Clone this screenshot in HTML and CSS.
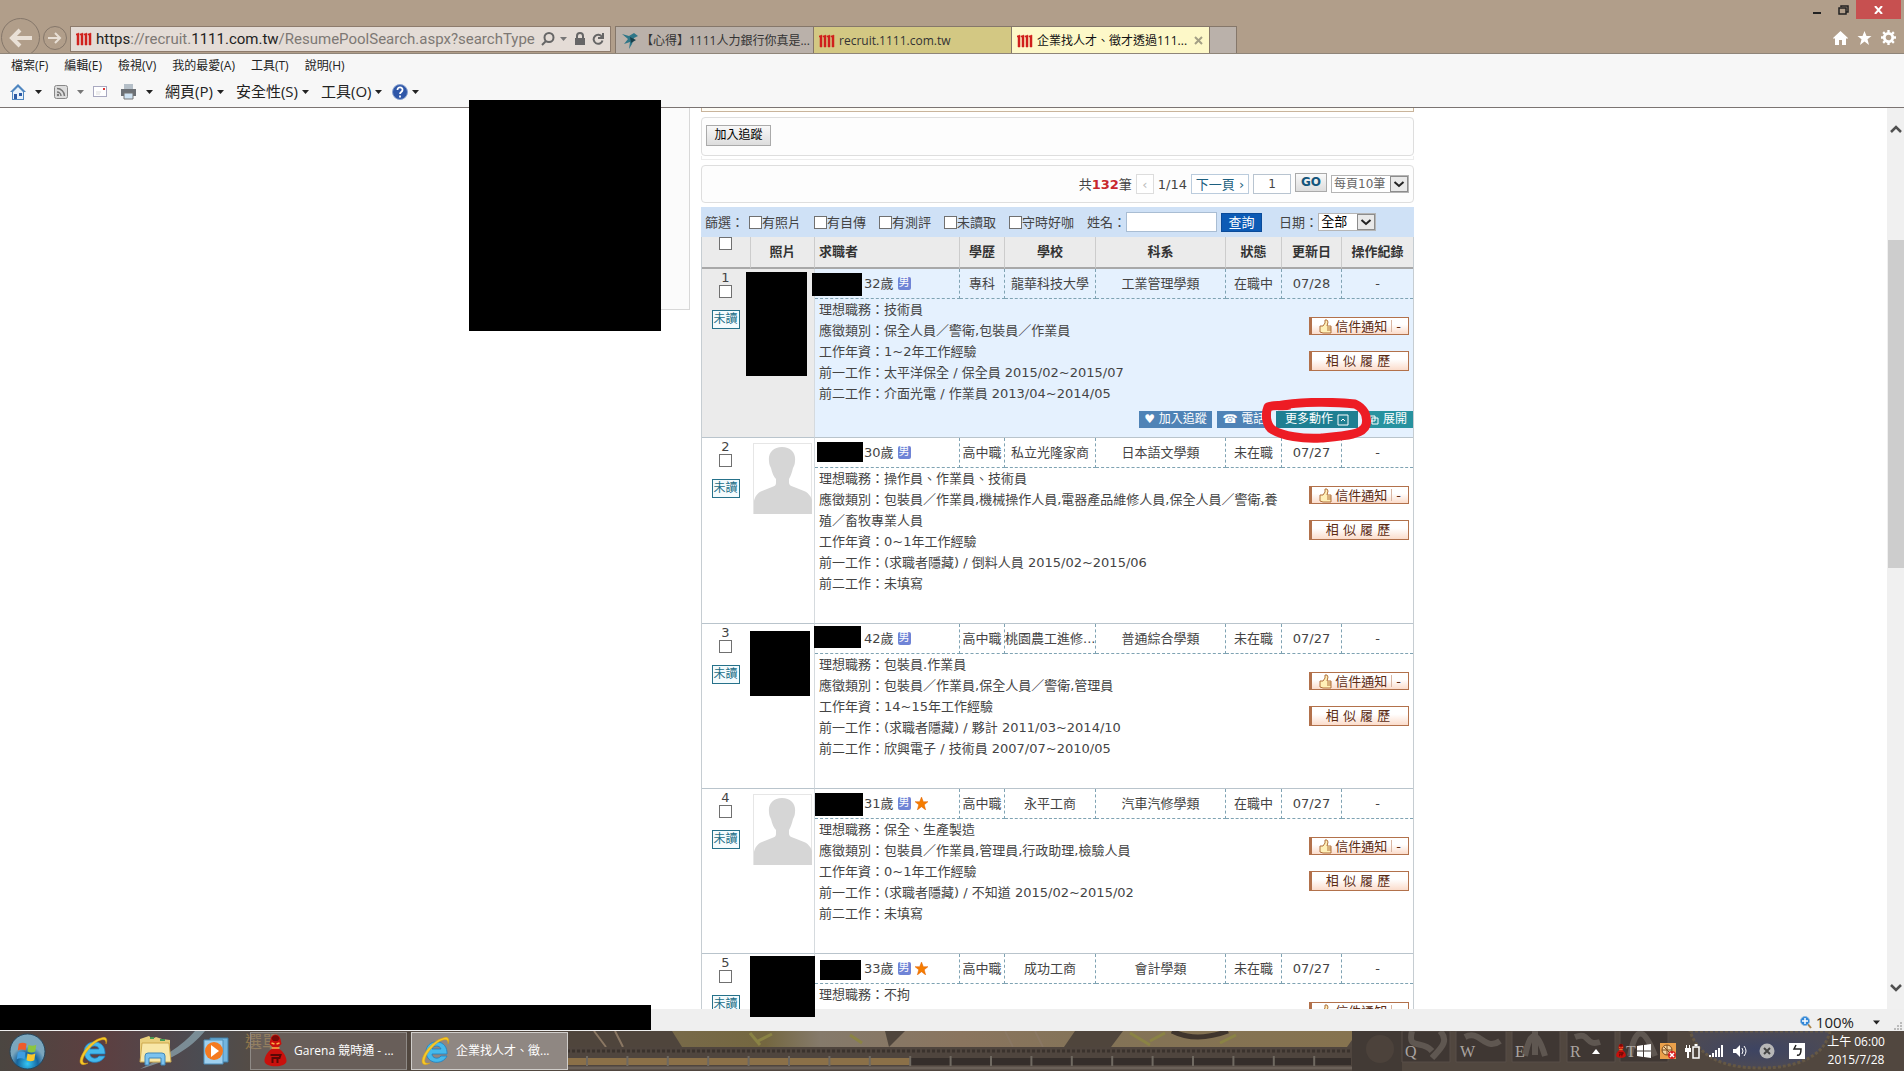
FILE: index.html
```html
<!DOCTYPE html>
<html lang="zh-Hant">
<head>
<meta charset="utf-8">
<title>企業找人才、徵才透過1111人力銀行</title>
<link rel="stylesheet" href="styles.css">
</head>
<body>
<svg class="defs" aria-hidden="true">
  <symbol id="favicon" viewBox="0 0 16 14"><path d="M0 2l3-1v12H1V3L0 3zM4 2l3-1v12H5V3L4 3zM8 2l3-1v12H9V3L8 3zM12 2l3-1v12h-2V3l-1 0z" fill="#d0211c" stroke="#d0211c" stroke-width=".5"/></symbol>
  <symbol id="caret" viewBox="0 0 7 4"><path d="M0 0h7L3.500 4z" fill="currentColor"/></symbol>
  <symbol id="chevron" viewBox="0 0 18 16"><rect x=".5" y=".5" width="17" height="15" fill="#e9e9e9" stroke="#8c8c8c"/><path d="M4.500 6L9 10l4.500-4" fill="none" stroke="#222" stroke-width="2"/></symbol>
  <symbol id="person" viewBox="0 0 59 71"><rect width="59" height="71" fill="#e6e6e6"/><path d="M1 1h57v69H1z" fill="#fff"/><path d="M29 4c9 0 14 6 13 14 0 3-1 5-2 7-1 5-3 9-4 11v4c0 2 2 3 5 4l10 4c5 2 7 6 8 9v14H1V58c1-4 3-8 8-10l10-4c3-1 4-2 4-4v-4c-2-2-4-6-5-11-1-2-2-4-2-7C15 10 20 4 29 4z" fill="#d6d6d6"/></symbol>
  <symbol id="star" viewBox="0 0 14 14"><path d="M7 0l2 5h5l-4 3.300L11.500 14 7 10.500 2.500 14 4 8.300 0 5h5z" fill="#f57c00" stroke="#e06000" stroke-width=".5"/></symbol>
  <symbol id="thumb" viewBox="0 0 14 15"><path d="M1 7h3l2-3V1h2l1 2-1 4h4v7H4l-3-1z" fill="#fff0b8" stroke="#b0713c"/><path d="M8 9h4M8 11h4" stroke="#b0713c"/></symbol>
  <symbol id="ie" viewBox="0 0 32 32"><path d="M27 19H12c0 4 6 6 9 2h6c-4 9-20 9-21-4C6 4 26 3 27 17zM12 14h9c-1-4-8-4-9 0z" fill="#45b9ec" stroke="#1f7fc0" stroke-width=".8"/><path d="M28 9c2-5 0-8-5-6C14 5 3 17 2 26c0 5 5 4 8 2-4 1-6 0-5-4C7 17 16 7 23 5c4-1 5 0 5 4z" fill="#f6c928" stroke="#d99b12" stroke-width=".5"/></symbol>
  <symbol id="garena" viewBox="0 0 24 36"><path d="M7 6c1-6 9-6 10 0l1 5-4 4c5 2 9 8 9 13 0 7-22 7-22 0 0-5 4-11 9-13l-4-4z" fill="#c9100c"/><path d="M8 6c1-5 7-5 8 0l-2 2h-4z" fill="#7a0a08"/><path d="M8 10l3 1M16 10l-3 1M8 15h8" stroke="#ffb347" stroke-width="1.500"/><path d="M7 22h10l-1 3H9v5M14 24v6" fill="none" stroke="#5c0805" stroke-width="2"/></symbol>
</svg>

<header class="titlebar">
  <div class="nav">
    <button class="back" aria-label="上一頁"><svg width="24" height="20" viewBox="0 0 24 20"><path d="M23 10H4M11 2l-8 8 8 8" fill="none" stroke="#e9e0d6" stroke-width="4"/></svg></button>
    <button class="forward" aria-label="下一頁"><svg width="14" height="12" viewBox="0 0 14 12"><path d="M0 6h11M7 1l5 5-5 5" fill="none" stroke="#e9e0d6" stroke-width="2"/></svg></button>
  </div>
  <div class="address">
    <svg width="16" height="14"><use href="#favicon"/></svg>
    <span class="url"><b>https</b>://recruit.<b>1111.com.tw</b>/ResumePoolSearch.aspx?searchType</span>
    <svg width="14" height="14" viewBox="0 0 14 14"><circle cx="8" cy="5.500" r="4.500" fill="none" stroke="#666" stroke-width="2"/><path d="M5 9l-4 4" stroke="#666" stroke-width="2"/></svg>
    <svg class="grey" width="7" height="4"><use href="#caret"/></svg>
    <svg class="lock" width="10" height="14" viewBox="0 0 10 14"><path d="M0 6h10v7H0z" fill="#666"/><path d="M2 6V4c0-4 6-4 6 0v2" fill="none" stroke="#666" stroke-width="2"/></svg>
    <svg width="12" height="12" viewBox="0 0 12 12"><path d="M10 4A4.500 4.500 0 1 0 10.500 7.500M11 0v5H6" fill="none" stroke="#666" stroke-width="2"/></svg>
  </div>
  <div class="tabs">
    <a class="tab tab-grey" href="#"><svg width="18" height="18" viewBox="0 0 18 18"><path d="M1 2l7 2 5-3 4 3-4 2-2 6-3 5 1-7-6 2 4-5z" fill="#2e7688"/><path d="M9 5l6 3-5 3" fill="#173f4b"/></svg><span>【心得】1111人力銀行你真是...</span></a>
    <a class="tab tab-olive" href="#"><svg width="16" height="14"><use href="#favicon"/></svg><span>recruit.1111.com.tw</span></a>
    <a class="tab tab-active" href="#"><svg width="16" height="14"><use href="#favicon"/></svg><span>企業找人才、徵才透過111...</span><svg class="tab-close" width="9" height="9" viewBox="0 0 9 9"><path d="M1 1l7 7M8 1L1 8" stroke="#a39f85" stroke-width="2"/></svg></a>
    <button class="newtab" aria-label="新索引標籤"></button>
  </div>
  <div class="corner">
    <div class="winbtns">
      <button aria-label="最小化"><svg width="8" height="10" viewBox="0 0 8 10"><path d="M0 7h8v2H0z" fill="#222"/></svg></button>
      <button aria-label="還原"><svg width="11" height="10" viewBox="0 0 11 10"><path d="M3 2V1h7v6H8M1 3h7v6H1z" fill="none" stroke="#222" stroke-width="1.500"/></svg></button>
      <button class="close" aria-label="關閉"><svg width="9" height="8" viewBox="0 0 9 8"><path d="M1 0l7 8M8 0L1 8" stroke="#fff" stroke-width="2"/></svg></button>
    </div>
    <div class="tools">
      <svg width="15" height="14" viewBox="0 0 15 14"><path d="M7.500 0L15 7l-1 1-1-1v7H9V9H6v5H2V7L1 8 0 7z" fill="#fff"/></svg>
      <svg width="15" height="14" viewBox="0 0 14 14"><path d="M7 0l2 5h5l-4 3.300L11.500 14 7 10.500 2.500 14 4 8.300 0 5h5z" fill="#fff"/></svg>
      <svg width="15" height="15" viewBox="0 0 16 16"><circle cx="8" cy="8" r="4.500" fill="none" stroke="#fff" stroke-width="3"/><path d="M8 0v3M8 13v3M0 8h3M13 8h3M2.300 2.300l2 2M11.700 11.700l2 2M2.300 13.700l2-2M11.700 4.300l2-2" stroke="#fff" stroke-width="2.500"/></svg>
    </div>
  </div>
</header>

<nav class="menubar">
  <a href="#">檔案(F)</a><a href="#">編輯(E)</a><a href="#">檢視(V)</a><a href="#">我的最愛(A)</a><a href="#">工具(T)</a><a href="#">說明(H)</a>
</nav>
<div class="commandbar">
  <svg width="16" height="16" viewBox="0 0 16 16"><path d="M8 0l8 8h-2v8H2V8H0z" fill="#4f86c0"/><path d="M3 8l5-5 5 5v7H3z" fill="#e8f2fb"/><path d="M4 10h3v5H4zM9 9h3v3H9z" fill="#2d5ba5"/></svg>
  <svg width="7" height="4"><use href="#caret"/></svg>
  <svg class="rss" width="14" height="14" viewBox="0 0 14 14"><rect x=".5" y=".5" width="13" height="13" rx="2" fill="#ddd" stroke="#888"/><path d="M3 7a4 4 0 0 1 4 4M3 3.500A7.500 7.500 0 0 1 10.500 11" fill="none" stroke="#777" stroke-width="1.500"/><circle cx="4" cy="10" r="1.200" fill="#777"/></svg>
  <svg class="grey" width="7" height="4"><use href="#caret"/></svg>
  <svg class="mail" width="14" height="11" viewBox="0 0 14 11"><rect x=".5" y=".5" width="13" height="10" fill="#fff" stroke="#a9a9c0"/><path d="M10 2h2v2h-2z" fill="#d33"/><path d="M3 6h5M3 8h4" stroke="#ddd"/></svg>
  <svg class="printer" width="17" height="16" viewBox="0 0 17 16"><path d="M4 0h9v6H4z" fill="#b5bfc8"/><path d="M1 5h15v7H1z" fill="#6c7075"/><path d="M4 9h9v6H4z" fill="#cfe3f3" stroke="#777"/></svg>
  <svg class="after" width="7" height="4"><use href="#caret"/></svg>
  <a class="cmd" href="#">網頁(P)<svg width="7" height="4"><use href="#caret"/></svg></a>
  <a class="cmd" href="#">安全性(S)<svg width="7" height="4"><use href="#caret"/></svg></a>
  <a class="cmd" href="#">工具(O)<svg width="7" height="4"><use href="#caret"/></svg></a>
  <a class="cmd help" href="#"><svg width="16" height="16" viewBox="0 0 16 16"><circle cx="8" cy="8" r="7.500" fill="#2f57a8" stroke="#8aa3d0"/><path d="M5.500 6c0-4 5.500-3 5 0 0 2-2.500 2-2.500 4M8 11.500v2" fill="none" stroke="#fff" stroke-width="1.800"/></svg><svg width="7" height="4"><use href="#caret"/></svg></a>
</div>

<div class="viewport">
  <main class="clip">
    <div class="page">
      <aside class="sidebar"></aside>
      <section class="results">
        <div class="notice"></div>
        <div class="panel follow"><button class="plain">加入追蹤</button></div>
        <div class="panel-foot"></div>
        <div class="panel pager">
          <span>共<b>132</b>筆</span>
          <button class="page-btn prev" disabled>‹</button>
          <span>1/14</span>
          <button class="page-btn next">下一頁 ›</button>
          <input class="page-no" type="text" value="1" aria-label="頁碼">
          <button class="go">GO</button>
          <span class="select per"><select aria-label="每頁筆數"><option>每頁10筆</option></select><svg width="18" height="16"><use href="#chevron"/></svg></span>
        </div>
        <form class="filter">
          <span>篩選：</span>
          <label><input type="checkbox">有照片</label>
          <label><input type="checkbox">有自傳</label>
          <label><input type="checkbox">有測評</label>
          <label><input type="checkbox">未讀取</label>
          <label><input type="checkbox">守時好咖</label>
          <label>姓名：<input class="name-box" type="text"></label>
          <button class="query" type="button">查詢</button>
          <label class="date">日期：<span class="select day"><select><option>全部</option></select><svg width="18" height="16"><use href="#chevron"/></svg></span></label>
        </form>
        <table class="list">
          <colgroup><col class="c-no"><col class="c-photo"><col class="c-name"><col class="c-edu"><col class="c-school"><col class="c-dept"><col class="c-state"><col class="c-date"><col></colgroup>
          <thead><tr>
            <th class="all"><input type="checkbox" aria-label="全選"></th><th>照片</th><th class="who">求職者</th><th>學歷</th><th>學校</th><th>科系</th><th>狀態</th><th>更新日</th><th>操作紀錄</th>
          </tr></thead>
          <tbody class="hot">
            <tr class="info"><td class="no" rowspan="2"><label>1<input type="checkbox"></label><span class="unread">未讀</span></td><td class="photo" rowspan="2"></td>
              <td class="who"><div class="age"><i></i>32歲<em>男</em></div></td><td>專科</td><td>龍華科技大學</td><td>工業管理學類</td><td>在職中</td><td>07/28</td><td>-</td></tr>
            <tr class="more"><td colspan="7"><div class="detail">
              <div class="lines"><p>理想職務：技術員</p><p>應徵類別：保全人員／警衛,包裝員／作業員</p><p>工作年資：1~2年工作經驗</p><p>前一工作：太平洋保全 / 保全員 2015/02~2015/07</p><p>前二工作：介面光電 / 作業員 2013/04~2014/05</p></div>
              <div class="side"><button class="mailbtn"><svg width="14" height="15"><use href="#thumb"/></svg><span>信件通知</span><s></s><span>-</span></button><button class="similar">相 似 履 歷</button></div>
            </div>
            <div class="actions"><button class="blue">♥ 加入追蹤</button><button class="blue phone">☎ 電話</button><button class="teal">更多動作 <svg width="12" height="12" viewBox="0 0 12 12"><path d="M1 1h10v10H1zM4 7l2-2 2 2" fill="none" stroke="#fff"/></svg></button><button class="cyan"><svg width="10" height="10" viewBox="0 0 10 10"><path d="M1 1h5v5H1zM3 3h6v6H3z" fill="none" stroke="#fff"/></svg> 展開</button></div></td></tr>
          </tbody>
          <tbody>
            <tr class="info"><td class="no" rowspan="2"><label>2<input type="checkbox"></label><span class="unread">未讀</span></td><td class="photo" rowspan="2"><svg width="59" height="71"><use href="#person"/></svg></td>
              <td class="who"><div class="age"><i></i>30歲<em>男</em></div></td><td>高中職</td><td>私立光隆家商</td><td>日本語文學類</td><td>未在職</td><td>07/27</td><td>-</td></tr>
            <tr class="more"><td colspan="7"><div class="detail">
              <div class="lines"><p>理想職務：操作員、作業員、技術員</p><p>應徵類別：包裝員／作業員,機械操作人員,電器產品維修人員,保全人員／警衛,養殖／畜牧專業人員</p><p>工作年資：0~1年工作經驗</p><p>前一工作：(求職者隱藏) / 倒料人員 2015/02~2015/06</p><p>前二工作：未填寫</p></div>
              <div class="side"><button class="mailbtn"><svg width="14" height="15"><use href="#thumb"/></svg><span>信件通知</span><s></s><span>-</span></button><button class="similar">相 似 履 歷</button></div>
            </div></td></tr>
          </tbody>
          <tbody>
            <tr class="info"><td class="no" rowspan="2"><label>3<input type="checkbox"></label><span class="unread">未讀</span></td><td class="photo" rowspan="2"></td>
              <td class="who"><div class="age"><i></i>42歲<em>男</em></div></td><td>高中職</td><td>桃園農工進修...</td><td>普通綜合學類</td><td>未在職</td><td>07/27</td><td>-</td></tr>
            <tr class="more"><td colspan="7"><div class="detail">
              <div class="lines"><p>理想職務：包裝員.作業員</p><p>應徵類別：包裝員／作業員,保全人員／警衛,管理員</p><p>工作年資：14~15年工作經驗</p><p>前一工作：(求職者隱藏) / 夥計 2011/03~2014/10</p><p>前二工作：欣興電子 / 技術員 2007/07~2010/05</p></div>
              <div class="side"><button class="mailbtn"><svg width="14" height="15"><use href="#thumb"/></svg><span>信件通知</span><s></s><span>-</span></button><button class="similar">相 似 履 歷</button></div>
            </div></td></tr>
          </tbody>
          <tbody>
            <tr class="info"><td class="no" rowspan="2"><label>4<input type="checkbox"></label><span class="unread">未讀</span></td><td class="photo" rowspan="2"><svg width="59" height="71"><use href="#person"/></svg></td>
              <td class="who"><div class="age"><i></i>31歲<em>男</em><svg width="13" height="13"><use href="#star"/></svg></div></td><td>高中職</td><td>永平工商</td><td>汽車汽修學類</td><td>在職中</td><td>07/27</td><td>-</td></tr>
            <tr class="more"><td colspan="7"><div class="detail">
              <div class="lines"><p>理想職務：保全、生產製造</p><p>應徵類別：包裝員／作業員,管理員,行政助理,檢驗人員</p><p>工作年資：0~1年工作經驗</p><p>前一工作：(求職者隱藏) / 不知道 2015/02~2015/02</p><p>前二工作：未填寫</p></div>
              <div class="side"><button class="mailbtn"><svg width="14" height="15"><use href="#thumb"/></svg><span>信件通知</span><s></s><span>-</span></button><button class="similar">相 似 履 歷</button></div>
            </div></td></tr>
          </tbody>
          <tbody>
            <tr class="info"><td class="no" rowspan="2"><label>5<input type="checkbox"></label><span class="unread">未讀</span></td><td class="photo" rowspan="2"></td>
              <td class="who"><div class="age"><i></i>33歲<em>男</em><svg width="13" height="13"><use href="#star"/></svg></div></td><td>高中職</td><td>成功工商</td><td>會計學類</td><td>未在職</td><td>07/27</td><td>-</td></tr>
            <tr class="more"><td colspan="7"><div class="detail">
              <div class="lines"><p>理想職務：不拘</p></div>
              <div class="side"><button class="mailbtn"><svg width="14" height="15"><use href="#thumb"/></svg><span>信件通知</span><s></s><span>-</span></button></div>
            </div></td></tr>
          </tbody>
        </table>
      </section>
    </div>
  </main>
  <div class="scrollbar">
    <svg width="12" height="8" viewBox="0 0 12 8"><path d="M1 7l5-5 5 5" fill="none" stroke="#505050" stroke-width="2.500"/></svg>
    <div class="track"><div class="thumb"></div></div>
    <svg width="12" height="8" viewBox="0 0 12 8"><path d="M1 1l5 5 5-5" fill="none" stroke="#505050" stroke-width="2.500"/></svg>
  </div>
  <div class="marks">
    <div class="mask m-side"></div>
    <div class="mask m-photo1"></div><div class="mask m-name1"></div>
    <div class="mask m-name2"></div>
    <div class="mask m-photo3"></div><div class="mask m-name3"></div>
    <div class="mask m-name4"></div>
    <div class="mask m-photo5"></div><div class="mask m-name5"></div>
    <svg class="ring" width="112" height="46" viewBox="0 0 112 46"><path d="M16 8C40 3 76 4 94 6c9 4 13 12 11 21-3 10-22 11-45 13-19 1-38-2-48-8C5 28 4 16 7 9c8-3 14 0 22-2" fill="none" stroke="#ed1c24" stroke-width="9" stroke-linejoin="round"/></svg>
  </div>
</div>

<footer class="status">
  <div class="mask m-status"></div>
  <svg width="12" height="13" viewBox="0 0 12 13"><path d="M7 7l4 5" stroke="#a8824a" stroke-width="2"/><circle cx="5" cy="5" r="4.500" fill="#2f86d8" stroke="#8bb8df"/><path d="M5 2v6M2 5h6" stroke="#fff" stroke-width="1.500"/></svg>
  <span>100%</span>
  <svg class="zoom-caret" width="7" height="5"><use href="#caret"/></svg>
  <svg class="grip" width="9" height="9" viewBox="0 0 9 9"><path d="M7 0h2v2H7zM7 3h2v2H7zM7 6h2v2H7zM4 3h2v2H4zM4 6h2v2H4zM1 6h2v2H1z" fill="#bbb"/></svg>
</footer>

<div class="taskbar">
  <svg class="wallpaper" viewBox="0 0 1904 40" preserveAspectRatio="none" aria-hidden="true">
    <defs>
      <linearGradient id="sky"><stop offset="0" stop-color="#4b4641"/><stop offset=".4" stop-color="#5d3f40"/><stop offset=".8" stop-color="#4b4c52"/><stop offset="1" stop-color="#544c46"/></linearGradient>
      <linearGradient id="field"><stop offset="0" stop-color="#554c43"/><stop offset=".05" stop-color="#7a6b4f"/><stop offset=".25" stop-color="#746740"/><stop offset=".32" stop-color="#857a6b"/><stop offset=".5" stop-color="#8a755f"/><stop offset=".68" stop-color="#837357"/><stop offset="1" stop-color="#86734f"/></linearGradient>
      <radialGradient id="orb"><stop offset="0" stop-color="#3d4463"/><stop offset="1" stop-color="#4c4a55"/></radialGradient>
    </defs>
    <rect width="1904" height="40" fill="#51473f"/>
    <rect width="250" height="40" fill="url(#sky)"/>
    <path d="M195 0h10c-15 18-35 30-65 38 22-11 42-23 55-38z" fill="#9ab9c4" opacity=".6"/>
    <path d="M570 0h782v9l-5 7H570z" fill="url(#field)"/>
    <path d="M567 0h105l10 16H567zM885 0h20l-16 16zM1075 0h48l-12 16h-47z" fill="#4f453c"/>
    <path d="M594 0l12 16M615 0l8 16M1005 0l8 16M1035 0l8 16" stroke="#8a7763" stroke-width="2"/>
    <path d="M750 2l10 12M758 10l14-7M850 4l12 8M1130 2l20 12M1150 10l15-8M1220 12l16-8" stroke="#8a8345" stroke-width="3"/>
    <path d="M1172 0q24 12 56 0" fill="none" stroke="#3f352d" stroke-width="5"/>
    <rect x="567" y="16" width="785" height="24" fill="#4f453e"/>
    <path d="M567 20h785" stroke="#3a322d" stroke-width="3" stroke-dasharray="3 2"/>
    <rect x="567" y="27" width="344" height="7" fill="#8b7048"/><rect x="911" y="27" width="440" height="7" fill="#352e2b"/>
    <path d="M586 30h780" stroke="#6f6961" stroke-width="10" stroke-dasharray="2 38.400"/><path d="M567 37h785" stroke="#6b6159" stroke-width="3"/>
    <path d="M1352 0h50v40h-50z" fill="#423a35"/><circle cx="1380" cy="18" r="14" fill="#4c423b"/>
    <g fill="#3f3733" stroke="#594f48"><path d="M1402 0h48v31h-48zM1456 0h50v31h-50zM1512 0h48v31h-48zM1567 0h48v31h-48zM1620 0h48v31h-48z"/></g>
    <path d="M1412 0c-5 20 10 8 20 20M1440 0c10 10 0 18-8 27M1465 6c15-8 20 15 35 4M1525 25q8-40 20 0M1535 0v24M1575 6c15-6 10 10 25 5M1630 25q8-45 25 0" fill="none" stroke="#5f5751" stroke-width="6"/>
    <path d="M1690 0h140c-5 24-30 37-70 37s-62-13-70-37z" fill="url(#orb)" stroke="#655845" stroke-width="3" stroke-dasharray="3 2"/>
    <g class="keys"><text x="1405" y="26">Q</text><text x="1460" y="26">W</text><text x="1515" y="26">E</text><text x="1570" y="26">R</text><text x="1626" y="26">T</text></g>
    <text class="ghost" x="245" y="17">選單</text>
  </svg>
  <button class="pin start" aria-label="開始"><svg width="37" height="37" viewBox="0 0 38 38"><defs><radialGradient id="ball" cy=".85"><stop offset="0" stop-color="#35c8f5"/><stop offset=".6" stop-color="#17659e"/><stop offset="1" stop-color="#7ba6bd"/></radialGradient></defs><circle cx="19" cy="19" r="18" fill="url(#ball)" stroke="#23465e"/><path d="M10 11q4-2 8 0l-1 7q-4-2-8 0z" fill="#ef5b2b"/><path d="M20 12q4 2 8 0l-1 7q-4 2-8 0z" fill="#8cc63e"/><path d="M9 20q4-2 8 0l-1 7q-4-2-8 0z" fill="#3f9de0"/><path d="M19 21q4 2 8 0l-1 7q-4 2-8 0z" fill="#fcc72b"/></svg></button>
  <button class="pin" aria-label="Internet Explorer"><svg width="32" height="32"><use href="#ie"/></svg></button>
  <button class="pin" aria-label="檔案總管"><svg width="34" height="30" viewBox="0 0 34 30"><path d="M2 3l9-3 3 3 4-2 6 2 8 1v22H2z" fill="#e9cf7d"/><path d="M4 7h27l2 19H2z" fill="#f8e7a8" stroke="#cda94f"/><path d="M7 29v-9q0-3 3-3h14q3 0 3 3v9h-4v-7H11v7z" fill="#7cc3ef" stroke="#4087b8"/><path d="M12 2h4M22 4h5" stroke="#4a9b55" stroke-width="2"/></svg></button>
  <button class="pin" aria-label="媒體播放器"><svg width="28" height="28" viewBox="0 0 28 28"><path d="M8 1h18v24H8z" fill="#73b5de" stroke="#3e7ea8"/><path d="M2 3h19v24H2z" fill="#9fd0ee" stroke="#4c8fbb"/><circle cx="12" cy="14" r="9" fill="#f47a20"/><path d="M9 8l8 6-8 6z" fill="#fff"/></svg></button>
  <div class="windows">
    <button class="task"><svg width="25" height="36"><use href="#garena"/></svg><span>Garena 競時通 - ...</span></button>
    <button class="task current"><svg width="32" height="32"><use href="#ie"/></svg><span>企業找人才、徵...</span></button>
  </div>
  <div class="tray">
    <svg width="8" height="5" viewBox="0 0 8 5"><path d="M4 0l4 5H0z" fill="#fff"/></svg>
    <svg width="14" height="16"><use href="#garena"/></svg>
    <svg width="14" height="14" viewBox="0 0 14 14"><path d="M0 2l6-1v5.500H0zM7 1l7-1v6.500H7zM0 7.500h6V13l-6-1zM7 7.500h7V14l-7-1z" fill="#fff"/></svg>
    <svg width="16" height="16" viewBox="0 0 16 16"><path d="M0 0h16v16H0z" fill="#eaa04a"/><circle cx="7" cy="7" r="5" fill="#f4d4a0" stroke="#7c4a1c"/><path d="M2 7h10M7 2v10M4 4l6 6" stroke="#7c4a1c"/><circle cx="12" cy="12" r="4" fill="#d61f1f"/><path d="M10 10l4 4M14 10l-4 4" stroke="#fff" stroke-width="1.500"/></svg>
    <svg width="15" height="15" viewBox="0 0 15 15"><path d="M8 3h6v11H8z" fill="none" stroke="#fff" stroke-width="1.500"/><path d="M9.500 0h3v2h-3zM0 4h6v4H4v6H2V8H0zM1 1h1v3H1zM4 1h1v3H4z" fill="#fff"/></svg>
    <svg width="15" height="12" viewBox="0 0 15 12"><path d="M0 10h2v2H0zM3 8h2v4H3zM6 5h2v7H6zM9 3h2v9H9zM12 0h2v12h-2z" fill="#fff"/></svg>
    <svg width="14" height="14" viewBox="0 0 14 14"><path d="M0 5h3l4-4v12L3 9H0z" fill="#fff"/><path d="M9 4q2 3 0 6M11 2q4 5 0 10" fill="none" stroke="#fff"/></svg>
    <svg class="off" width="16" height="16" viewBox="0 0 16 16"><circle cx="8" cy="8" r="7.500" fill="#b7b7b7"/><path d="M5 5l6 6M11 5l-6 6" stroke="#444" stroke-width="2"/></svg>
    <svg class="ime" width="16" height="16" viewBox="0 0 16 16"><path d="M0 0h16v16H0z" fill="#fff"/><path d="M7 2L5 6h7c0 4-1 7-4 6" fill="none" stroke="#222" stroke-width="1.500"/></svg>
    <time>上午 06:00<br>2015/7/28</time>
  </div>
</div>
</body>
</html>
```
FILE: styles.css
```css
* { box-sizing: border-box; }
html, body { height: 100%; }
body {
  margin: 0;
  display: flex;
  flex-direction: column;
  overflow: hidden;
  background: #fff;
  color: #444;
  font: 13px/21px "DejaVu Sans", "Noto Sans CJK TC", sans-serif;
}
button, input, select { font: inherit; color: inherit; margin: 0; padding: 0; border: 0; }
button { display: flex; align-items: center; justify-content: center; background: none; white-space: nowrap; }
a { color: inherit; text-decoration: none; }
svg { flex: none; display: block; }
p { margin: 0; }
.defs { position: absolute; width: 0; height: 0; }
.mask { background: #000; position: absolute; }
.grey { color: #777; }

/* window frame */
.titlebar {
  flex: none;
  display: flex;
  height: 54px;
  background: #b19e8a;
  border-bottom: 1px solid #8f8579;
  overflow: hidden;
  font-family: "Open Sans", "Noto Sans CJK TC", sans-serif;
}
.nav { display: flex; align-items: center; gap: 3px; width: 70px; padding: 22px 0 0 1px; }
.back { width: 39px; height: 39px; border: 1px solid #85776a; border-radius: 50%; flex: none; }
.forward { width: 24px; height: 24px; border: 1px solid #85776a; border-radius: 50%; flex: none; }
.address {
  display: flex;
  align-items: center;
  width: 541px;
  height: 26px;
  margin-top: 26px;
  padding: 0 6px 0 5px;
  background: #e4dcd6;
  border: 1px solid #8d7b6c;
  color: #7d7874;
  font: 15px Roboto, sans-serif;
}
.url { flex: 1; margin-left: 4px; white-space: nowrap; }
.url b { font-weight: 400; color: #222; }
.address .grey { margin: 0 8px 0 5px; }
.lock { margin-right: 7px; }
.tabs { display: flex; margin: 26px 0 0 4px; height: 28px; border-top: 1px solid #85776a; border-left: 1px solid #85776a; }
.tab {
  display: flex;
  align-items: center;
  gap: 4px;
  width: 198px;
  padding: 0 6px 0 5px;
  border-right: 1px solid #85776a;
  font-size: 12px;
  color: #333;
  white-space: nowrap;
}
.tab-grey { background: #bab1aa; padding-right: 0; gap: 2px; }
.tab-olive { background: #d3c883; }
.tab-active { background: #fdf8c8; color: #111; }
.tab-close { margin-left: auto; }
.newtab { width: 27px; background: #bab1aa; border-right: 1px solid #85776a; }
.corner { margin-left: auto; display: flex; flex-direction: column; align-items: flex-end; justify-content: space-between; }
.winbtns { display: flex; padding-right: 3px; }
.winbtns button { width: 26px; height: 19px; }
.winbtns .close { width: 45px; background: #c75050; }
.tools { display: flex; align-items: center; gap: 9px; padding: 0 8px 8px 0; }

.menubar, .commandbar { flex: none; display: flex; align-items: center; background: #f7f7f7; color: #222; white-space: nowrap; font-family: "Open Sans", "Noto Sans CJK TC", sans-serif; }
.menubar { height: 22px; gap: 16px; padding-left: 11px; font-size: 12px; }
.commandbar { height: 32px; padding-left: 10px; border-bottom: 1px solid #7b7472; font-size: 15px; color: #222; }
.commandbar > svg + svg { margin-left: 9px; }
.commandbar .rss { margin-left: 12px; }
.commandbar .mail + .printer { margin-left: 13px; }
.cmd { display: flex; align-items: center; gap: 4px; margin-left: 12px; }
.cmd.help { margin-left: 10px; }

/* page area */
.viewport { flex: 1; min-height: 0; display: flex; position: relative; }
.clip { flex: 1; overflow: hidden; }
.page { display: flex; align-items: flex-start; gap: 11px; width: 941px; margin: 0 auto; }
.sidebar { width: 217px; height: 202px; background: #fbfbfb; border: 1px solid #d8d8d8; border-top: 0; }
.results { flex: 1; min-width: 0; }
.notice { height: 4px; border: 1px solid #c9b49b; border-top: 0; background: #fffdf6; margin-bottom: 5px; }
.panel { display: flex; align-items: center; border: 1px solid #dedede; border-radius: 4px; background: #fdfdfd; height: 38px; }
.follow { padding: 0 4px 3px; height: 39px; }
.panel-foot { height: 4px; margin-bottom: 5px; border: 1px solid #ececec; border-top: 0; }
.plain { width: 65px; height: 21px; border: 1px solid #aaa; background: linear-gradient(#f8f8f8, #ddd); color: #000; font-size: 12px; }
.pager { justify-content: flex-end; gap: 4px; padding-right: 4px; }
.pager b { color: #c8282d; }
.page-btn { height: 20px; border: 1px solid #bcd; background: #fff; color: #1c5f80; }
.prev { width: 18px; border-color: #ddd; color: #bbb; }
.next { width: 58px; }
.page-no { width: 38px; height: 20px; border: 1px solid #b8c4d0; text-align: center; font-size: 12px; }
.go { width: 32px; height: 19px; margin-bottom: 4px; border: 1px solid #aaa; background: linear-gradient(#fafafa, #ddd); color: #14567c; font-weight: 700; font-size: 12px; }
.select { position: relative; display: block; height: 18px; background: #fff; border: 1px solid #b5b5b5; }
.select select { appearance: none; display: block; width: 100%; height: 16px; padding-left: 2px; background: none; line-height: 16px; }
.select svg { position: absolute; right: 0; top: 0; pointer-events: none; }
.per { width: 78px; color: #666; font-size: 12px; }
.day { width: 58px; color: #000; }
.filter { display: flex; align-items: center; gap: 13px; height: 30px; margin-top: 4px; padding-left: 4px; background: #cfe1f6; white-space: nowrap; }
.filter > span { margin-right: -8px; }
.filter label { display: flex; align-items: center; }
input[type="checkbox"] { appearance: none; flex: none; width: 13px; height: 13px; border: 1px solid #707070; background: #fff; }
.name-box { width: 91px; height: 20px; border: 1px solid #a9bdd3; background: #fff; }
.query { width: 41px; height: 19px; margin-left: -9px; background: #0d5bb5; border: 1px solid #0b4b99; color: #fff; }
.filter .date { margin-left: 4px; }

/* candidates */
.list { width: 100%; table-layout: fixed; border-collapse: separate; border-spacing: 0; border: solid #c6cdd2; border-width: 0 1px; }
.c-no { width: 49px; } .c-photo { width: 64px; } .c-name { width: 145px; } .c-edu { width: 45px; }
.c-school { width: 91px; } .c-dept { width: 130px; } .c-state { width: 56px; } .c-date { width: 60px; }
th, td { padding: 0; text-align: center; vertical-align: top; }
th { height: 32px; background: #ebebeb; border-right: 1px solid #ccc; border-bottom: 2px solid #a8a8a8; vertical-align: middle; white-space: nowrap; color: #333; padding-bottom: 1px; }
th:last-child { border-right: 0; }
.list .all { vertical-align: top; padding: 0 2px 0 0; line-height: 0; }
.list .who { text-align: left; padding-left: 4px; }
.info td { height: 30px; padding-top: 4px; border-right: 1px dashed #7fa3b3; border-bottom: 1px dashed #7fa3b3; white-space: nowrap; }
.info td:last-child { border-right: 0; }
.info .no, .info .photo, .more td { border-bottom: 1px solid #b9c4cc; }
.info .no { padding: 1px 2px 0 0; border-right: 0; }
.info .photo { padding: 5px 0 0 2px; border-right: 1px solid #d5dade; }
.no label { display: flex; flex-direction: column; align-items: center; line-height: 15px; }
.unread { display: block; width: 28px; height: 19px; margin: 12px auto 0; border: 1px solid #26718a; color: #1a6d86; background: #f4fbfd; font-size: 12px; line-height: 17px; }
.age { display: flex; align-items: center; height: 21px; }
.age i { width: 45px; }
.age em { width: 13px; height: 13px; margin: 0 4px 0 4px; border-radius: 2px; background: #6f84d6; color: #fff; font-style: normal; font-size: 11px; line-height: 12px; text-align: center; }
.detail { display: flex; justify-content: space-between; padding: 0 4px 29px; text-align: left; }
.lines { width: 459px; word-break: break-all; }
.side { display: flex; flex-direction: column; gap: 16px; width: 100px; padding-top: 18px; }
.mailbtn, .similar { border: 1px solid #b2714b; border-left-width: 3px; background: linear-gradient(#fff 40%, #fbdccb); color: #5c2c14; }
.mailbtn { height: 18px; gap: 4px; overflow: hidden; }
.mailbtn svg { margin-right: -2px; }
.mailbtn s { width: 1px; height: 12px; background: #d8b6a2; }
.similar { height: 20px; padding-right: 4px; line-height: 16px; }
.hot td { background: #e5f1fe; }
.hot .no, .hot .photo { background: #ebebeb; }
.hot .detail { padding-bottom: 7px; }
.actions { display: flex; justify-content: flex-end; gap: 5px; padding-bottom: 9px; }
.actions button { height: 17px; color: #fff; line-height: 17px; font-size: 12px; gap: 4px; }
.blue { width: 73px; background: #4f83b6; }
.actions .phone { width: 54px; }
.teal { width: 82px; background: #1f7f92; }
.cyan { width: 50px; background: #27929f; }

/* redactions and pen mark laid over the page, in step with its centred column */
.marks { position: absolute; z-index: 1; top: 0; left: 0; right: 17px; width: 941px; margin: 0 auto; pointer-events: none; }
.m-side { left: -4px; top: -8px; width: 192px; height: 231px; }
.m-photo1 { left: 273px; top: 164px; width: 61px; height: 104px; }
.m-name1 { left: 339px; top: 165px; width: 50px; height: 23px; }
.m-name2 { left: 344px; top: 334px; width: 46px; height: 20px; }
.m-photo3 { left: 277px; top: 523px; width: 60px; height: 65px; }
.m-name3 { left: 341px; top: 518px; width: 47px; height: 22px; }
.m-name4 { left: 342px; top: 685px; width: 48px; height: 23px; }
.m-photo5 { left: 277px; top: 848px; width: 65px; height: 61px; }
.m-name5 { left: 347px; top: 852px; width: 41px; height: 20px; }
.ring { position: absolute; left: 788px; top: 290px; }

.scrollbar { width: 17px; display: flex; flex-direction: column; align-items: center; padding: 17px 0; background: #f0f0f0; }
.track { flex: 1; width: 100%; padding: 107px 0 0 1px; }
.thumb { height: 328px; background: #cdcdcd; }

.status { flex: none; position: relative; display: flex; align-items: center; justify-content: flex-end; height: 22px; padding: 4px 2px 0 0; background: #efefef; color: #222; font: 15px/18px "Open Sans", sans-serif; }
.m-status { left: 0; top: -4px; width: 651px; height: 25px; }
.status span { margin: 0 19px 0 4px; }
.zoom-caret { margin-right: 13px; }
.grip { align-self: flex-end; }

.taskbar { flex: none; position: relative; display: flex; align-items: center; height: 40px; color: #fff; font: 12px/18px "Open Sans", "Noto Sans CJK TC", sans-serif; }
.wallpaper { position: absolute; width: 100%; height: 100%; }
.keys { font: 16px "Liberation Serif", serif; fill: #aaa4a0; }
.ghost { font: 17px "Noto Sans CJK TC", sans-serif; fill: #8d744a; }
.taskbar > :not(.wallpaper) { position: relative; }
.pin { width: 61px; height: 40px; }
.start { width: 54px; margin-right: 9px; }
.windows { display: flex; gap: 4px; margin-left: 4px; }
.task { width: 157px; height: 38px; justify-content: flex-start; gap: 6px; padding-left: 12px; border: 1px solid #8f8a86; background: rgba(160, 150, 150, .3); }
.task.current { padding-left: 8px; gap: 4px; background: rgba(205, 200, 198, .5); border-color: #d0cdca; }
.tray { display: flex; align-items: center; gap: 9px; margin-left: auto; padding-right: 8px; }
.tray svg:nth-child(1) { margin-right: 5px; }
.off { margin-left: 3px; }
.ime { margin-left: 5px; }
.tray time { width: 80px; margin-left: 2px; text-align: center; }
```
